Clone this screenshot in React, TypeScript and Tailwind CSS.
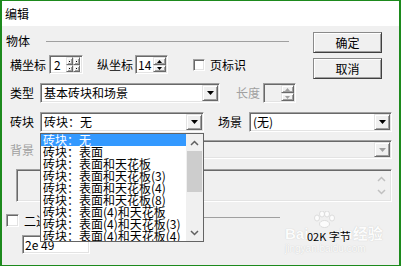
import React from 'react';

// classic win32 bevels
const sunken =
  'border border-t-[#a0a0a0] border-l-[#a0a0a0] border-b-white border-r-white shadow-[inset_1px_1px_0_#696969,inset_-1px_-1px_0_#e3e3e3] p-px';
const raised =
  'bg-[#f0f0f0] border border-t-[#e3e3e3] border-l-[#e3e3e3] border-b-[#696969] border-r-[#696969] shadow-[inset_1px_1px_0_#fff,inset_-1px_-1px_0_#a0a0a0]';

function Tri({ up = false, color = '#000', w = 7, h = 4 }: { up?: boolean; color?: string; w?: number; h?: number }) {
  return (
    <svg width={w} height={h} viewBox={`0 0 ${w} ${h}`}>
      <path d={up ? `M0 ${h}H${w}L${w / 2} 0z` : `M0 0H${w}L${w / 2} ${h}z`} fill={color} />
    </svg>
  );
}

function Chevron({ up = false, color = '#606060' }: { up?: boolean; color?: string }) {
  return (
    <svg width="9" height="6" viewBox="0 0 9 6">
      <path d={up ? 'M1 5L4.5 1.5L8 5' : 'M1 1L4.5 4.5L8 1'} stroke={color} strokeWidth="1.5" fill="none" />
    </svg>
  );
}

function Combo({ className, text, disabled }: { className: string; text?: string; disabled?: boolean }) {
  return (
    <div className={`${sunken} ${className} ${disabled ? 'bg-[#f0f0f0]' : 'bg-white'} flex`}>
      <span className="flex-1 flex items-center pl-[2px] whitespace-nowrap overflow-hidden">{text}</span>
      <div className={`${raised} w-[16px] flex items-center justify-center`}>
        <Tri color={disabled ? '#a0a0a0' : '#000'} />
      </div>
    </div>
  );
}

function Spin({ className, text, disabled }: { className: string; text?: string; disabled?: boolean }) {
  const c = disabled ? '#a0a0a0' : '#000';
  return (
    <div className={`${sunken} ${className} ${disabled ? 'bg-[#f0f0f0]' : 'bg-white'} flex`}>
      <span className="flex-1 flex items-center pl-[1px]">{text}</span>
      <div className="w-[13px] flex flex-col">
        <div className={`${raised} h-[8px] flex items-center justify-center`}>
          <Tri up color={c} w={5} h={3} />
        </div>
        <div className={`${raised} flex-1 flex items-center justify-center`}>
          <Tri color={c} w={5} h={3} />
        </div>
      </div>
    </div>
  );
}

// the squeezed updown beside 横坐标
function NarrowSpin() {
  return (
    <div className={`${sunken} w-[34px] h-[19px] bg-white flex`}>
      <span className="flex items-center pl-[3px] w-[15px]">2</span>
      {[0, 1].map((i) => (
        <div key={i} className="w-[7px] flex flex-col">
          <div className={`${raised} h-[8px] flex items-center justify-center`}>
            <div className="w-px h-px bg-black" />
          </div>
          <div className={`${raised} flex-1 flex items-center justify-center`}>
            <div className="w-px h-px bg-black" />
          </div>
        </div>
      ))}
    </div>
  );
}

const items = [
  '砖块：无',
  '砖块：表面',
  '砖块：表面和天花板',
  '砖块：表面和天花板(3)',
  '砖块：表面和天花板(4)',
  '砖块：表面和天花板(8)',
  '砖块：表面(4)和天花板',
  '砖块：表面(4)和天花板(3)',
  '砖块：表面(4)和天花板(4)',
];

export default function App() {
  return (
    <div className="w-[401px] h-[266px] border-t border-l-2 border-r-2 border-b border-[#1d8a1d] flex flex-col overflow-hidden font-['Noto_Sans_CJK_SC',sans-serif] text-[12px] leading-[12px] text-black">
      {/* title bar */}
      <div className="h-[25px] bg-white pl-[3px] pt-[7px]">编辑</div>

      <div className="relative flex-1 bg-[#f0f0f0] flex flex-col">
        {/* 物体 group + buttons */}
        <div className="flex h-[53px]">
          <div className="flex-1 flex flex-col">
            <div className="flex items-center h-[12px] mt-[9px] pl-[4px]">
              <span>物体</span>
              <div className="ml-[16px] w-[243px] h-px bg-[#a0a0a0]" />
            </div>
            <div className="flex items-center h-[19px] mt-[8px] pl-[8px]">
              <span>横坐标</span>
              <div className="ml-[3px]">
                <NarrowSpin />
              </div>
              <span className="ml-[14px]">纵坐标</span>
              <Spin className="ml-[2px] w-[33px] h-[19px]" text="14" />
              <div className={`${sunken} ml-[25px] w-[12px] h-[12px] bg-white`} />
              <span className="ml-[5px]">页标识</span>
            </div>
          </div>
          <div className="w-[69px] mr-[17px] pt-[6px] flex flex-col gap-[5px]">
            <button className="h-[21px] bg-[#f0f0f0] border border-t-[#8a8a8a] border-l-[#8a8a8a] border-b-[#404040] border-r-[#404040] shadow-[inset_1px_1px_0_#fff,inset_-1px_-1px_0_#a0a0a0] flex items-center justify-center">
              确定
            </button>
            <button className="h-[21px] bg-[#f0f0f0] border border-t-[#8a8a8a] border-l-[#8a8a8a] border-b-[#404040] border-r-[#404040] shadow-[inset_1px_1px_0_#fff,inset_-1px_-1px_0_#a0a0a0] flex items-center justify-center">
              取消
            </button>
          </div>
        </div>

        {/* 类型 */}
        <div className="flex items-center h-[20px] mt-[4px] pl-[8px]">
          <span>类型</span>
          <Combo className="ml-[6px] w-[180px] h-[20px]" text="基本砖块和场景" />
          <span className="ml-[16px] text-[#a0a0a0]">长度</span>
          <Spin className="ml-[3px] w-[33px] h-[20px]" disabled />
        </div>

        {/* 砖块 / 场景 */}
        <div className="flex items-center h-[20px] mt-[9px] pl-[8px]">
          <span>砖块</span>
          <Combo className="ml-[6px] w-[164px] h-[20px]" text="砖块：无" />
          <span className="ml-[14px]">场景</span>
          <Combo className="ml-[7px] w-[143px] h-[20px]" text="(无)" />
        </div>

        {/* 背景 */}
        <div className="flex items-center h-[19px] mt-[8px] pl-[8px]">
          <span className="text-[#a0a0a0]">背景</span>
          <Combo className="ml-[6px] w-[352px] h-[19px]" disabled />
        </div>

        {/* disabled multiline */}
        <div className={`${sunken} mt-[10px] ml-[14px] w-[376px] h-[33px] bg-[#f0f0f0] flex justify-end`}>
          <div className="w-[17px] flex flex-col items-center justify-around py-[2px]">
            <Chevron up color="#c0c0c0" />
            <Chevron color="#c0c0c0" />
          </div>
        </div>

        {/* 二进制 */}
        <div className="flex items-center h-[13px] mt-[12px] pl-[4px]">
          <div className={`${sunken} w-[13px] h-[13px] bg-white`} />
          <span className="ml-[5px] w-[36px] whitespace-nowrap">二进制</span>
          <div className="self-start mt-[3px] ml-[4px] w-[216px] h-px bg-[#a0a0a0]" />
        </div>

        <div className="flex items-start mt-[3px]">
          <div className={`${sunken} ml-[20px] mt-[5px] w-[68px] h-[19px] bg-white flex items-center pl-[2px]`}>2e 49</div>
          <span className="relative z-10 ml-[217px] text-[11px]">02K 字节</span>
        </div>

        {/* watermark */}
        <div className="absolute left-[283px] top-[185px] w-[92px] h-[44px] text-white [text-shadow:0_0_1px_#b8b8b8] opacity-80 pointer-events-none">
          <svg className="absolute left-[27px] top-0" width="24" height="17" viewBox="0 0 24 17">
            <g fill="#fff" stroke="#d0d0d0" strokeWidth="0.8">
              <ellipse cx="5" cy="7" rx="2.5" ry="3" />
              <ellipse cx="10" cy="3" rx="2.5" ry="3" />
              <ellipse cx="15" cy="3" rx="2.5" ry="3" />
              <ellipse cx="20" cy="7" rx="2.5" ry="3" />
              <ellipse cx="12.5" cy="13" rx="5" ry="3.5" />
            </g>
          </svg>
          <div className="absolute left-0 top-[14px] text-[15px] leading-[15px] font-bold font-['Liberation_Sans',sans-serif] whitespace-nowrap">
            Bai<span className="ml-[26px]">du</span>
            <span className="font-['Noto_Sans_CJK_SC',sans-serif]">经验</span>
          </div>
          <div className="absolute left-0 top-[33px] text-[10px] leading-[10px] font-['Liberation_Sans',sans-serif] whitespace-nowrap">
            jingyan.baidu.com
          </div>
        </div>

        {/* open dropdown of 砖块 */}
        <div className="absolute left-[38px] top-[107px] w-[164px] h-[109px] border border-[#646464] bg-white flex overflow-hidden">
          <div className="flex-1 flex flex-col">
            {items.map((t, i) => (
              <div
                key={t}
                className={`h-[12px] shrink-0 pl-[2px] whitespace-nowrap ${i === 0 ? 'bg-[#3399ff] text-white' : ''}`}
              >
                {t}
              </div>
            ))}
          </div>
          <div className="w-[17px] bg-[#f0f0f0] flex flex-col">
            <div className="h-[17px] flex items-center justify-center">
              <Chevron up />
            </div>
            <div className="h-[41px] mx-px bg-[#cdcdcd]" />
            <div className="flex-1" />
            <div className="h-[17px] flex items-center justify-center">
              <Chevron />
            </div>
          </div>
        </div>
      </div>
    </div>
  );
}
